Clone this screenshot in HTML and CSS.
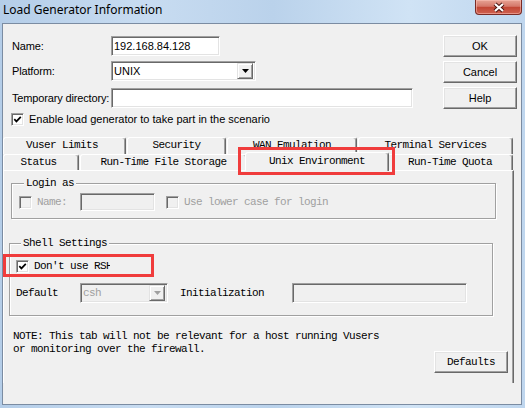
FILE: index.html
```html
<!DOCTYPE html>
<html lang="en">
<head>
  <meta charset="UTF-8" />
  <title>Load Generator Information</title>
  <link rel="stylesheet" href="styles.css">
</head>
<body>

  <div class="window">
    <div class="titlebar">
      <span class="title">Load Generator Information</span>
      <span class="close-btn">
        <svg width="14" height="11" viewBox="0 0 14 11">
          <path d="M3 2 L11 9 M11 2 L3 9" stroke="#4a1410" stroke-width="4.2" fill="none"/>
          <path d="M3 2 L11 9 M11 2 L3 9" stroke="#fff" stroke-width="2.2" fill="none"/>
        </svg>
      </span>
    </div>

    <div class="client">
      <div class="head">
        <div class="fields">
          <div class="field-row">
            <label class="field-label">Name:</label>
            <span class="edit edit-name">192.168.84.128</span>
          </div>
          <div class="field-row">
            <label class="field-label">Platform:</label>
            <span class="combo combo-platform">
              <span>UNIX</span>
              <span class="drop">
                <svg width="7" height="4" viewBox="0 0 7 4"><path d="M0 0h7l-3.5 4z" fill="#000"/></svg>
              </span>
            </span>
          </div>
          <div class="field-row temp-row">
            <label class="field-label">Temporary directory:</label>
            <span class="edit edit-temp"></span>
          </div>
          <div class="check-row">
            <span class="chk">
              <svg width="9" height="9" viewBox="0 0 9 9"><path d="M1.3 4.2 L3.4 6.4 L7.8 1.8" stroke="#000" stroke-width="1.7" fill="none"/></svg>
            </span>
            <span>Enable load generator to take part in the scenario</span>
          </div>
        </div>

        <div class="buttons">
          <button class="btn">OK</button>
          <button class="btn">Cancel</button>
          <button class="btn">Help</button>
        </div>
      </div>

      <div class="tabs">
        <div class="tab-row">
          <div class="tab tab-vuser">Vuser Limits</div>
          <div class="tab tab-security">Security</div>
          <div class="tab tab-wan">WAN Emulation</div>
          <div class="tab tab-terminal">Terminal Services</div>
        </div>
        <div class="tab-row front">
          <div class="tab tab-status">Status</div>
          <div class="tab tab-storage">Run-Time File Storage</div>
          <div class="tab tab-unix selected">Unix Environment</div>
          <div class="tab tab-quota">Run-Time Quota</div>
        </div>
      </div>

      <div class="panel">
        <fieldset class="group group-login">
          <legend>Login as</legend>
          <div class="group-row">
            <span class="chk-item item-name"><span class="chk disabled"></span><span class="dim">Name:</span></span>
            <span class="edit disabled edit-login"></span>
            <span class="chk-item"><span class="chk disabled"></span><span class="dim">Use lower case for login</span></span>
          </div>
        </fieldset>

        <fieldset class="group group-shell">
          <legend>Shell Settings</legend>
          <div class="group-row">
            <span class="chk-item">
              <span class="chk">
                <svg width="9" height="9" viewBox="0 0 9 9"><path d="M1.3 4.2 L3.4 6.4 L7.8 1.8" stroke="#000" stroke-width="1.7" fill="none"/></svg>
              </span>
              <span class="clip-label">Don't use RSH</span>
            </span>
          </div>
          <div class="group-row default-row">
            <span class="default-label">Default</span>
            <span class="combo disabled combo-shell">
              <span class="dim">csh</span>
              <span class="drop">
                <svg width="7" height="4" viewBox="0 0 7 4"><path d="M0 0h7l-3.5 4z" fill="#a0a0a0"/></svg>
              </span>
            </span>
            <span class="init-label">Initialization</span>
            <span class="edit disabled edit-init"></span>
          </div>
        </fieldset>

        <div class="note-row">
          <p class="note">NOTE: This tab will not be relevant for a host running Vusers<br>or monitoring over the firewall.</p>
          <button class="btn btn-defaults">Defaults</button>
        </div>
      </div>
    </div>

    <!-- red highlight frames drawn over the dialog -->
    <div class="mark mark-tab"></div>
    <div class="mark mark-rsh"></div>
  </div>

</body>
</html>
```

FILE: styles.css
```css
* {
  box-sizing: border-box;
}

html, body {
  margin: 0;
}

body {
  width: 525px;
  height: 408px;
  overflow: hidden;
  font-family: "Liberation Sans", Arial, sans-serif;
  font-size: 11px;
  color: #000;
}

.window {
  position: relative;
  width: 525px;
  height: 408px;
  display: flex;
  flex-direction: column;
  padding: 0 3px 3px 2px;
  background: linear-gradient(90deg, #b4cde8 0%, #c8dcf1 28%, #bad2eb 52%, #d0e3f5 78%, #bfd6ee 100%);
}

/* title bar */
.titlebar {
  height: 23px;
  display: flex;
  align-items: flex-start;
}

.title {
  margin: 2px 0 0 1px;
  font-family: "Noto Sans", "Open Sans", sans-serif;
  font-size: 12px;
  line-height: 16px;
}

.close-btn {
  margin-left: auto;
  width: 47px;
  height: 15px;
  display: flex;
  align-items: center;
  justify-content: center;
  border: 1px solid #7a2b25;
  border-top: none;
  border-radius: 0 0 4px 4px;
  background: linear-gradient(#e6a394, #d5786a 45%, #c24735 52%, #cf6150 100%);
  box-shadow: inset 0 0 0 1px rgba(255, 200, 190, 0.5);
}

/* client area */
.client {
  flex: 1;
  display: flex;
  flex-direction: column;
  background: #f0f0f0;
  border: 1px solid #7b8ca2;
}

.head {
  height: 113px;
  display: flex;
  justify-content: space-between;
}

.fields {
  padding: 12px 0 0 9px;
}

.field-row {
  display: flex;
  align-items: center;
  height: 20px;
}

.field-row + .field-row {
  margin-top: 5px;
}

.field-row.temp-row {
  margin-top: 7px;
}

.field-label {
  flex: none;
  width: 99px;
  white-space: nowrap;
  letter-spacing: -0.15px;
}

.edit,
.combo {
  height: 20px;
  background: #fff;
  border: 1px solid;
  border-color: #a0a0a0 #fff #fff #a0a0a0;
  box-shadow: inset 1px 1px #696969, inset -1px -1px #e3e3e3;
  padding: 0 2px;
  line-height: 18px;
}

.edit.disabled,
.combo.disabled {
  background: #f0f0f0;
}

.edit-name {
  width: 109px;
}

.edit-temp {
  width: 302px;
}

.combo {
  display: flex;
  align-items: center;
  justify-content: space-between;
  padding: 0 2px 0 2px;
}

.combo-platform {
  width: 145px;
}

.drop {
  width: 16px;
  height: 16px;
  display: flex;
  align-items: center;
  justify-content: center;
  background: #f0f0f0;
  border: 1px solid;
  border-color: #e3e3e3 #696969 #696969 #e3e3e3;
  box-shadow: inset 1px 1px #fff, inset -1px -1px #a0a0a0;
}

.chk {
  flex: none;
  width: 13px;
  height: 13px;
  display: inline-flex;
  align-items: center;
  justify-content: center;
  background: #fff;
  border: 1px solid;
  border-color: #a0a0a0 #fff #fff #a0a0a0;
  box-shadow: inset 1px 1px #696969, inset -1px -1px #e3e3e3;
}

.chk.disabled {
  background: #f0f0f0;
}

.check-row {
  display: flex;
  align-items: center;
  gap: 5px;
  height: 14px;
  margin: 4px 0 0 -1px;
}

.buttons {
  display: flex;
  flex-direction: column;
  gap: 4px;
  padding-top: 11px;
  margin-right: 4px;
}

.btn {
  width: 74px;
  height: 22px;
  padding: 0;
  font-family: "Liberation Sans", Arial, sans-serif;
  font-size: 11px;
  color: #000;
  background: #f0f0f0;
  border: 1px solid;
  border-color: #fff #696969 #696969 #fff;
  box-shadow: inset -1px -1px #a0a0a0, inset 1px 1px #e3e3e3;
}

/* tab strip, two rows */
.tabs,
.panel {
  font-family: "Liberation Mono", "DejaVu Sans Mono", monospace;
  font-size: 11px;
  letter-spacing: -0.6px;
}

.tab-row {
  display: flex;
}

.tab {
  height: 17px;
  margin-right: 1px;
  background: #f0f0f0;
  border-top: 1px solid #fff;
  border-left: 1px solid #fff;
  border-right: 1px solid #696969;
  border-radius: 3px 3px 0 0;
  box-shadow: inset -1px 0 #a0a0a0;
  text-align: center;
  line-height: 15px;
  white-space: nowrap;
}

.tab-row.front .tab {
  height: 16px;
}

.tab-vuser { width: 123px; padding-right: 5px; }
.tab-security { width: 99px; }
.tab-wan { width: 130px; }
.tab-terminal { width: 155px; }

.tab-status { width: 76px; padding-right: 5px; }
.tab-storage { width: 167px; }
.tab-unix { width: 144px; }
.tab-quota { width: 126px; }

.tab-row.front .tab.selected {
  position: relative;
  z-index: 1;
  height: 19px;
  margin: -2px -2px -1px -3px;
  line-height: 16px;
}

.panel {
  width: 511px;
  height: 213px;
  border-top: 1px solid #fff;
  border-left: 1px solid #fff;
  border-right: 1px solid #696969;
  box-shadow: inset -1px 0 #a0a0a0;
}

/* group boxes */
.group {
  margin: 0;
  padding: 0;
  min-inline-size: 0;
  border: 1px solid #a0a0a0;
  box-shadow: inset 1px 1px #fff, 1px 1px #fff;
}

.group legend {
  margin-left: 5px;
  padding: 0 2px;
  line-height: 13px;
  background: #f0f0f0;
}

.group-login {
  width: 485px;
  margin: 6px 0 0 7px;
  padding: 3px 0 7px 7px;
}

.group-shell {
  width: 484px;
  margin: 18px 0 0 5px;
  padding: 6px 0 12px 6px;
}

.group-row {
  display: flex;
  align-items: center;
  height: 20px;
}

.group-login .group-row {
  height: 18px;
}

.chk-item {
  display: flex;
  align-items: center;
  gap: 5px;
}

.item-name {
  width: 61px;
}

.dim {
  color: #a0a0a0;
}

.edit-login {
  width: 75px;
  height: 18px;
  margin-right: 11px;
}

.clip-label {
  width: 76px;
  overflow: hidden;
  white-space: nowrap;
}

.default-row {
  margin-top: 7px;
}

.default-label {
  width: 64px;
}

.combo-shell {
  width: 88px;
}

.init-label {
  width: 112px;
  margin-left: 12px;
}

.edit-init {
  width: 175px;
}

.note-row {
  display: flex;
  align-items: flex-start;
  justify-content: space-between;
  margin-top: 14px;
  padding-left: 9px;
}

.note {
  margin: 0;
  line-height: 13px;
}

.btn-defaults {
  margin: 21px 5px 0 0;
  font-family: "Liberation Mono", "DejaVu Sans Mono", monospace;
  letter-spacing: -0.6px;
}

/* red highlight frames */
.mark {
  position: absolute;
  border: 3px solid #f03c3c;
  pointer-events: none;
}

.mark-tab {
  left: 238px;
  top: 147px;
  width: 157px;
  height: 28px;
}

.mark-rsh {
  left: 3px;
  top: 254px;
  width: 151px;
  height: 23px;
}
```
